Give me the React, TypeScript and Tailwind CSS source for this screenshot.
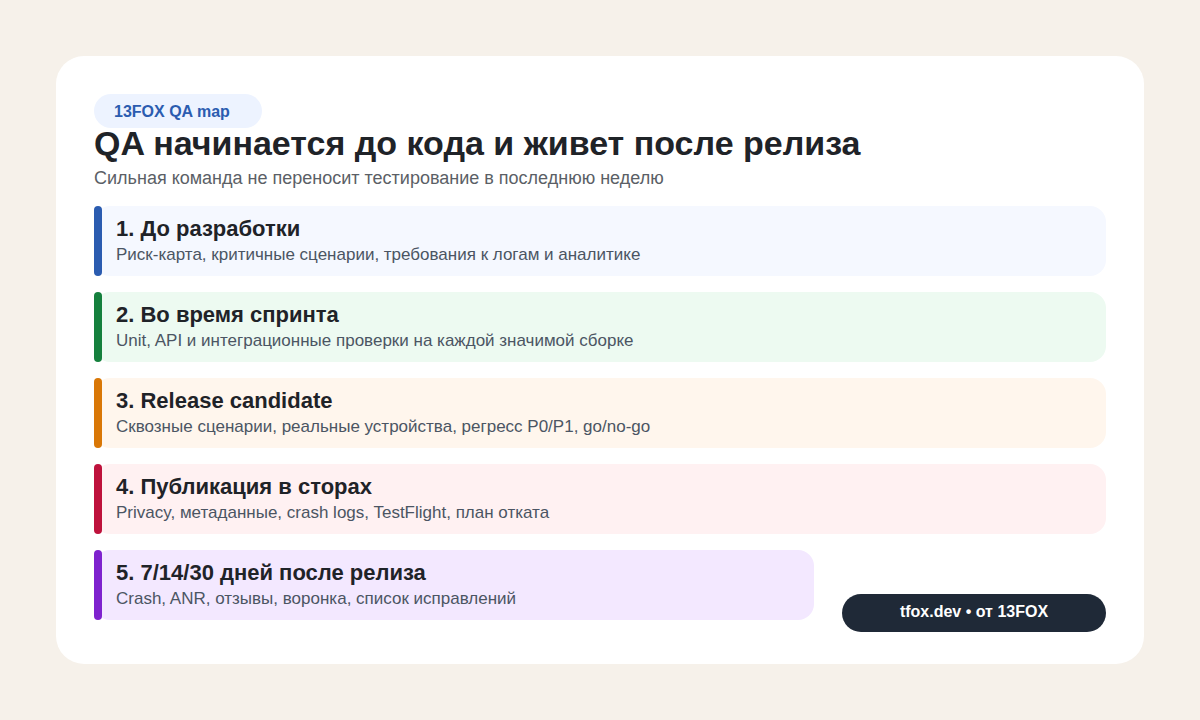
const steps = [
  { title: "1. До разработки", text: "Риск-карта, критичные сценарии, требования к логам и аналитике", bg: "bg-[#f5f8ff]", bar: "bg-[#2b5cb0]" },
  { title: "2. Во время спринта", text: "Unit, API и интеграционные проверки на каждой значимой сборке", bg: "bg-[#edfaf1]", bar: "bg-[#15803d]" },
  { title: "3. Release candidate", text: "Сквозные сценарии, реальные устройства, регресс P0/P1, go/no-go", bg: "bg-[#fff6ed]", bar: "bg-[#d97706]" },
  { title: "4. Публикация в сторах", text: "Privacy, метаданные, crash logs, TestFlight, план отката", bg: "bg-[#fff1f2]", bar: "bg-[#be123c]" },
]

function Step({ title, text, bg, bar, className }: { title: string; text: string; bg: string; bar: string; className?: string }) {
  return (
    <div className={`relative h-[70px] rounded-[16px] pl-[22px] pt-[10px] ${bg} ${className ?? ""}`}>
      <div className={`absolute left-0 top-0 h-full w-2 rounded-[4px] ${bar}`} />
      <div className="text-[22px] leading-[25px] font-bold text-[#1f2328]">{title}</div>
      <div className="mt-[4px] text-[17px] leading-[20px] text-[#4b5563]">{text}</div>
    </div>
  )
}

export default function App() {
  return (
    <div className="h-[720px] w-[1200px] bg-[#f6f1ea] p-14 font-['Liberation_Sans',Arial,sans-serif]">
      <div className="flex h-[608px] flex-col rounded-[28px] bg-white px-[38px] pt-[38px]">
        <div className="h-[34px] w-[168px] rounded-full bg-[#edf3ff] pl-5 text-[16px] leading-[36px] font-bold text-[#2b5cb0]">13FOX QA map</div>
        <h1 className="mt-[-4px] text-[34px] leading-[38px] font-bold text-[#1f2328]">QA начинается до кода и живет после релиза</h1>
        <p className="mt-[5px] text-[18px] leading-[22px] text-[#5b5f66]">Сильная команда не переносит тестирование в последнюю неделю</p>
        <div className="mt-[17px] flex flex-col gap-4">
          {steps.map((s) => (
            <Step key={s.title} {...s} />
          ))}
          <div className="flex items-start justify-between">
            <Step className="w-[720px]" title="5. 7/14/30 дней после релиза" text="Crash, ANR, отзывы, воронка, список исправлений" bg="bg-[#f3e8ff]" bar="bg-[#7e22ce]" />
            <div className="mt-[44px] h-[38px] w-[264px] rounded-full bg-[#1f2937] text-center text-[16px] leading-[36px] font-bold text-white">tfox.dev • от 13FOX</div>
          </div>
        </div>
      </div>
    </div>
  )
}
